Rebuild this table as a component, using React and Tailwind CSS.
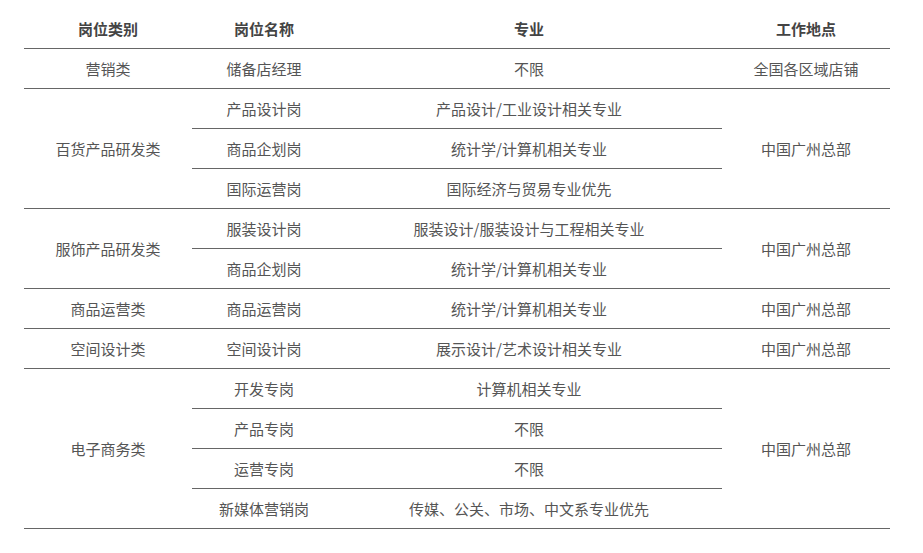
import React from "react";

const font = { fontFamily: '"Microsoft YaHei","Noto Sans CJK SC","Noto Sans",sans-serif' };

const rows = [
  { cat: "营销类", items: [["储备店经理", "不限"]], loc: "全国各区域店铺" },
  {
    cat: "百货产品研发类",
    items: [
      ["产品设计岗", "产品设计/工业设计相关专业"],
      ["商品企划岗", "统计学/计算机相关专业"],
      ["国际运营岗", "国际经济与贸易专业优先"],
    ],
    loc: "中国广州总部",
  },
  {
    cat: "服饰产品研发类",
    items: [
      ["服装设计岗", "服装设计/服装设计与工程相关专业"],
      ["商品企划岗", "统计学/计算机相关专业"],
    ],
    loc: "中国广州总部",
  },
  { cat: "商品运营类", items: [["商品运营岗", "统计学/计算机相关专业"]], loc: "中国广州总部" },
  { cat: "空间设计类", items: [["空间设计岗", "展示设计/艺术设计相关专业"]], loc: "中国广州总部" },
  {
    cat: "电子商务类",
    items: [
      ["开发专岗", "计算机相关专业"],
      ["产品专岗", "不限"],
      ["运营专岗", "不限"],
      ["新媒体营销岗", "传媒、公关、市场、中文系专业优先"],
    ],
    loc: "中国广州总部",
  },
];

export default function App() {
  const td = "h-[40px] px-0 pt-[2px] pb-0 text-center align-middle border-b border-[#666]";
  return (
    <div className="w-[923px] h-[553px] bg-white" style={font}>
      <table className="ml-[24px] mt-[8px] w-[866px] table-fixed border-collapse text-[15px] text-[#555]">
        <colgroup>
          <col className="w-[168px]" />
          <col className="w-[144px]" />
          <col className="w-[386px]" />
          <col className="w-[168px]" />
        </colgroup>
        <thead>
          <tr>
            {["岗位类别", "岗位名称", "专业", "工作地点"].map((h) => (
              <th key={h} className={`${td} font-bold text-[#444]`}>
                {h}
              </th>
            ))}
          </tr>
        </thead>
        <tbody>
          {rows.map((g, gi) =>
            g.items.map((it, i) => (
              <tr key={gi + "-" + i}>
                {i === 0 && (
                  <td rowSpan={g.items.length} className={td}>
                    {g.cat}
                  </td>
                )}
                <td className={td}>{it[0]}</td>
                <td className={td}>{it[1]}</td>
                {i === 0 && (
                  <td rowSpan={g.items.length} className={td}>
                    {g.loc}
                  </td>
                )}
              </tr>
            ))
          )}
        </tbody>
      </table>
    </div>
  );
}
